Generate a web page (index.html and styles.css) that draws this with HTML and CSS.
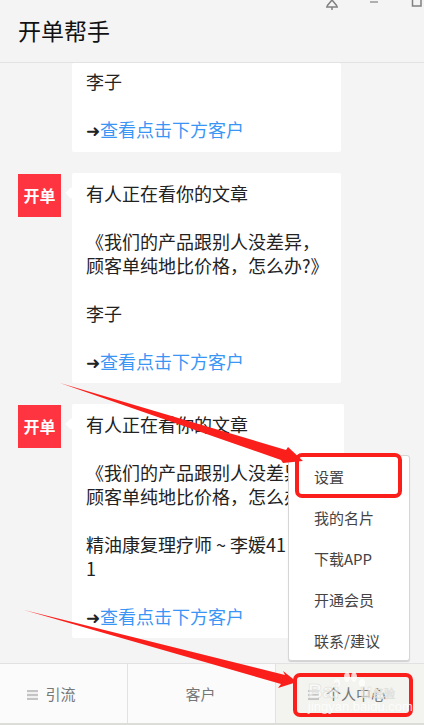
FILE: index.html
```html
<!DOCTYPE html>
<html lang="en">

<head>
    <meta charset="UTF-8">
    <meta name="viewport" content="width=device-width, initial-scale=1.0">
    <title>开单帮手</title>
    <link rel="stylesheet" href="styles.css">
</head>

<body>
    <div class="app">
        <header class="top">
            <h1>开单帮手</h1>
            <!-- window buttons, cut off by the top edge -->
            <svg class="win-btns" width="100" height="10" viewBox="0 0 100 10">
                <path d="M1 7H13M7 0L2 6M7 0L12 6M7 7V10" fill="none" stroke="#808080" stroke-width="1.5" />
                <path d="M45 2H53" stroke="#999" stroke-width="1.5" />
                <path d="M87.500 -2V6H96V-2" fill="none" stroke="#808080" stroke-width="1.5" />
            </svg>
        </header>

        <main class="chat">
            <!-- first message is scrolled under the header -->
            <div class="msg msg-first">
                <div class="avatar-space"></div>
                <div class="card">
                    <p>李子</p>
                    <p class="more"><span class="arr">➜</span><a href="#">查看点击下方客户</a></p>
                </div>
            </div>

            <div class="msg">
                <div class="avatar">开单</div>
                <div class="card">
                    <p>有人正在看你的文章</p>
                    <p>《我们的产品跟别人没差异，<br>顾客单纯地比价格，怎么办?》</p>
                    <p>李子</p>
                    <p class="more"><span class="arr">➜</span><a href="#">查看点击下方客户</a></p>
                </div>
            </div>

            <div class="msg">
                <div class="avatar">开单</div>
                <div class="card card-wide">
                    <p>有人正在看你的文章</p>
                    <p>《我们的产品跟别人没差异，<br>顾客单纯地比价格，怎么办?》</p>
                    <p>精油康复理疗师 ~ 李媛41<br>1</p>
                    <p class="more"><span class="arr">➜</span><a href="#">查看点击下方客户</a></p>
                </div>
            </div>
        </main>

        <footer class="tabs">
            <div class="tab tab-first"><span class="bars"></span>引流</div>
            <div class="tab tab-mid">客户</div>
            <div class="tab tab-on"><span class="bars"></span>个人中心</div>
        </footer>

        <ul class="menu">
            <li>设置</li>
            <li>我的名片</li>
            <li>下载APP</li>
            <li>开通会员</li>
            <li>联系/建议</li>
        </ul>

        <!-- red marks and watermark drawn over the screenshot -->
        <svg class="marks" width="424" height="725" viewBox="0 0 424 725">
            <polygon class="red" points="60,383 286,450 288,447 303,461 283,463 281,460" />
            <rect class="red-box" x="297" y="455" width="103" height="41" rx="5" />
            <polygon class="red" points="24,610 285,675 283,671 297,682 278,688 281,684" />
            <rect class="red-box" x="295" y="675" width="116" height="40" rx="5" />
            <g class="logo">
                <ellipse cx="347" cy="677" rx="3" ry="5" />
                <ellipse cx="354" cy="677" rx="3" ry="5" />
                <ellipse cx="337" cy="683" rx="3" ry="4" />
                <ellipse cx="362" cy="683" rx="3" ry="4" />
            </g>
            <text class="wm" x="308" y="698">Bai</text>
            <text class="wm" x="360" y="698">u</text>
            <text class="wm wm-cn" x="373" y="698">经验</text>
            <text class="wm-small" x="308" y="711">jingyan.baidu.com</text>
        </svg>
    </div>
</body>

</html>
```

FILE: styles.css
```css
* {
    box-sizing: border-box;
}

body {
    margin: 0;
    background-color: #f4f4f4;
    color: #222;
    font-family: "Noto Sans CJK SC", "Liberation Sans", sans-serif;
}

.app {
    position: relative;
    width: 424px;
    height: 725px;
    overflow: hidden;
    display: flex;
    flex-direction: column;
}

.top {
    position: relative;
    flex: none;
    height: 63px;
    padding-left: 18px;
    padding-bottom: 3px;
    display: flex;
    align-items: center;
    background-color: #f4f4f4;
    border-bottom: 1px solid #e2e2e2;
}

.top h1 {
    margin: 0;
    font-size: 23px;
    font-weight: 400;
    color: #111;
}

.win-btns {
    position: absolute;
    top: 0;
    left: 325px;
}

.chat {
    flex: 1;
    overflow: hidden;
    padding: 0 18px;
}

.msg {
    display: flex;
    align-items: flex-start;
    margin-bottom: 21px;
}

.avatar,
.avatar-space {
    flex: none;
    width: 43px;
    margin-right: 11px;
}

.avatar {
    position: relative;
    height: 43px;
    margin-top: 1px;
    background-color: #fe3440;
    color: white;
    font-size: 16px;
    font-weight: 700;
    line-height: 43px;
    text-align: center;
}

.avatar::after {
    content: "";
    position: absolute;
    top: 15px;
    left: 49px;
    width: 8px;
    height: 8px;
    background-color: white;
    transform: rotate(45deg);
}

.card {
    width: 269px;
    padding: 8px 14px 10px;
    background-color: white;
    border-radius: 2px;
    font-size: 18px;
    line-height: 24px;
}

.card-wide {
    width: 272px;
}

.card p {
    margin: 0 0 24px;
}

.card .more {
    height: 24px;
    margin-bottom: 0;
}

.arr {
    display: inline-block;
    width: 14px;
    font-size: 17px;
    line-height: 1;
}

.more a {
    color: #3a96f5;
    text-decoration: none;
}

.msg-first .card {
    padding-top: 6px;
    padding-bottom: 11px;
}

.tabs {
    flex: none;
    height: 62px;
    display: flex;
    background-color: #fbfbfb;
    border-top: 1px solid #e2e2e2;
    border-bottom: 2px solid #dcdcd8;
    font-size: 15px;
    color: #777;
}

.tab {
    display: flex;
    align-items: center;
    justify-content: center;
}

.tab-first {
    width: 128px;
    padding-right: 24px;
    border-right: 1px solid #e2e2e2;
}

.tab-mid {
    width: 148px;
    padding-right: 2px;
    border-right: 1px solid #e2e2e2;
}

.tab-on {
    flex: 1;
    padding-right: 6px;
    background-color: #f3f3ef;
}

.bars {
    width: 11px;
    height: 10px;
    margin-right: 7px;
    margin-top: 3px;
    background: repeating-linear-gradient(#c4c4c4 0 2px, #f0f0f0 2px 4px);
}

.menu {
    position: absolute;
    top: 455px;
    left: 288px;
    width: 122px;
    height: 206px;
    margin: 0;
    padding: 0;
    list-style: none;
    background-color: white;
    border: 1px solid #d6d6d6;
    border-radius: 3px;
    box-shadow: 0 1px 1px rgba(0, 0, 0, 0.15);
    font-size: 15px;
    color: #444;
}

.menu li {
    height: 41px;
    padding-left: 25px;
    line-height: 41px;
}

.marks {
    position: absolute;
    top: 0;
    left: 0;
}

.red {
    fill: #fb1f1b;
}

.red-box {
    fill: none;
    stroke: #fb1f1b;
    stroke-width: 4;
}

.logo {
    fill: #ffffff;
    opacity: 0.8;
}

.wm {
    fill: #ffffff;
    fill-opacity: 0.5;
    stroke: #dcdcd8;
    stroke-width: 0.5;
    font-size: 20px;
    font-weight: 700;
    font-family: "Liberation Sans", sans-serif;
}

.wm-cn {
    font-size: 11px;
    font-weight: 400;
    font-family: "Noto Sans CJK SC", sans-serif;
}

.wm-small {
    fill: #ffffff;
    opacity: 0.8;
    font-size: 13px;
    font-family: "Liberation Sans", sans-serif;
}
```
